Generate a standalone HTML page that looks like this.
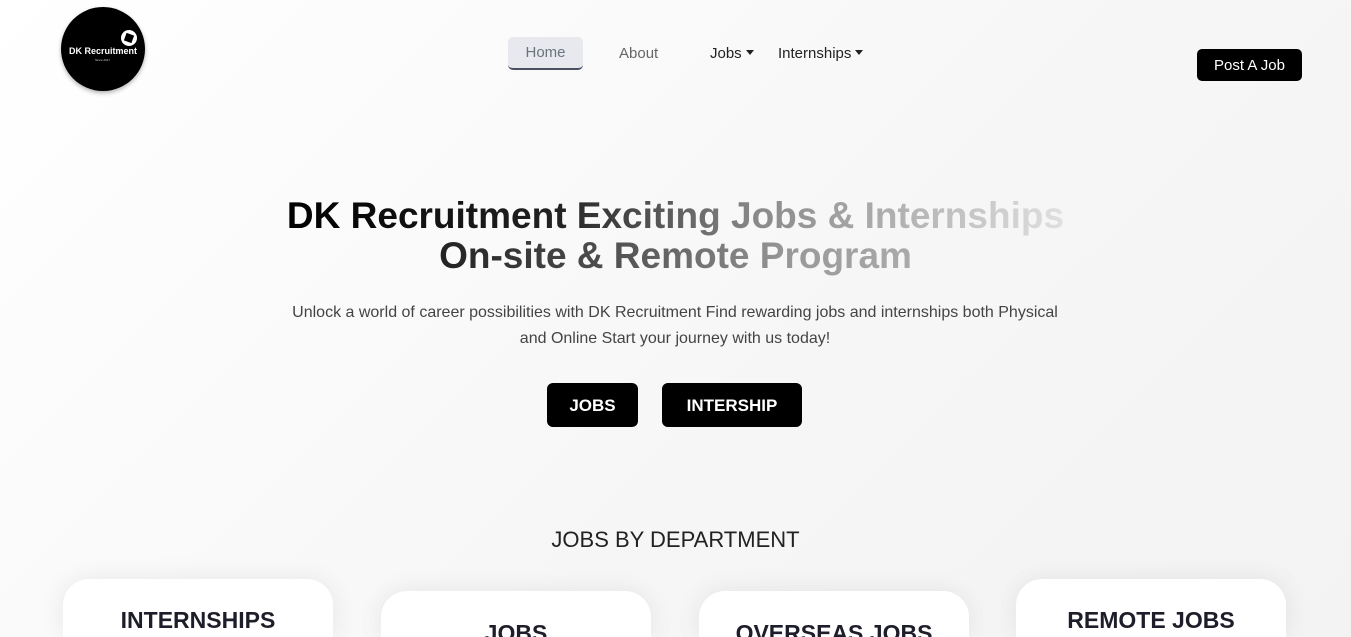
<!DOCTYPE html>
<html><head><style>
*{margin:0;padding:0;box-sizing:border-box}
html,body{width:1351px;height:637px;overflow:hidden}
body{background:linear-gradient(135deg,#fff 0%,#f6f6f6 60%,#f3f3f3 100%);font-family:"Liberation Sans",sans-serif;position:relative;color:#222}
.logo{position:absolute;left:61px;top:7px;width:84px;height:84px;border-radius:50%;background:#000;box-shadow:0 2px 4px rgba(0,0,0,.3)}
.logo .t{position:absolute;left:8px;top:39px;color:#fff;font-size:9px;font-weight:bold;white-space:nowrap}
.logo .s{position:absolute;left:34px;top:51px;color:#ccc;font-size:3px}
.logo .c{position:absolute;left:60px;top:23px;width:16px;height:16px;border-radius:50%;background:#fff}
.logo .c:after{content:"";position:absolute;left:4px;top:4px;width:8px;height:8px;background:#000;transform:rotate(20deg)}
.nav{position:absolute;top:37px;font-size:15px;color:#666}
.home{position:absolute;left:508px;top:37px;width:75px;height:33px;background:#e7e9ee;border-radius:5px;border-bottom:2px solid #4a5060;color:#6b7280;font-size:15px;text-align:center;line-height:31px}
.caret{display:inline-block;border-left:4px solid transparent;border-right:4px solid transparent;border-top:5px solid #222;vertical-align:3px;margin-left:4px}
.post{position:absolute;left:1197px;top:49px;width:105px;height:32px;background:#000;color:#fff;border-radius:5px;font-size:15px;text-align:center;line-height:34px}
h1{position:absolute;left:0;width:1351px;top:196px;text-align:center;font-size:37px;line-height:40px;font-weight:bold}
h1 span{-webkit-background-clip:text;background-clip:text;color:transparent}
p.d{position:absolute;left:280px;width:790px;top:300px;text-align:center;font-size:16px;line-height:26px;color:#444}
.btn{position:absolute;top:383px;height:44px;background:#000;color:#fff;border-radius:6px;font-weight:bold;font-size:17px;text-align:center;line-height:45px}
h2{position:absolute;top:527px;left:0;width:1351px;text-align:center;font-weight:normal;font-size:22px;color:#222}
.card{position:absolute;width:270px;background:#fff;border-radius:26px 26px 0 0;box-shadow:0 0 25px rgba(0,0,0,.08);text-align:center;font-weight:bold;font-size:23px;color:#1e1e2a;overflow:hidden}
</style></head><body>
<div class="logo"><div class="c"></div><div class="t">DK Recruitment</div><div class="s">Since 2017</div></div>
<div class="home">Home</div>
<div class="nav" style="left:619px;top:45px">About</div>
<div class="nav" style="left:710px;top:45px;color:#222">Jobs<span class="caret"></span></div>
<div class="nav" style="left:778px;top:45px;color:#222">Internships<span class="caret"></span></div>
<div class="post">Post A Job</div>
<h1><span style="background-image:linear-gradient(90deg,#000 0%,#222 35%,#888 60%,#e0e0e0 100%)">DK Recruitment Exciting Jobs &amp; Internships</span><br><span style="background-image:linear-gradient(90deg,#222 0%,#555 40%,#999 75%,#aaa 100%)">On-site &amp; Remote Program</span></h1>
<p class="d">Unlock a world of career possibilities with DK Recruitment Find rewarding jobs and internships both Physical and Online Start your journey with us today!</p>
<div class="btn" style="left:547px;width:91px">JOBS</div>
<div class="btn" style="left:662px;width:140px">INTERSHIP</div>
<h2>JOBS BY DEPARTMENT</h2>
<div class="card" style="left:63px;top:579px;height:58px;padding-top:28px">INTERNSHIPS</div>
<div class="card" style="left:381px;top:591px;height:46px;padding-top:29px">JOBS</div>
<div class="card" style="left:699px;top:591px;height:46px;padding-top:29px">OVERSEAS JOBS</div>
<div class="card" style="left:1016px;top:579px;height:58px;padding-top:28px">REMOTE JOBS</div>
</body></html>
